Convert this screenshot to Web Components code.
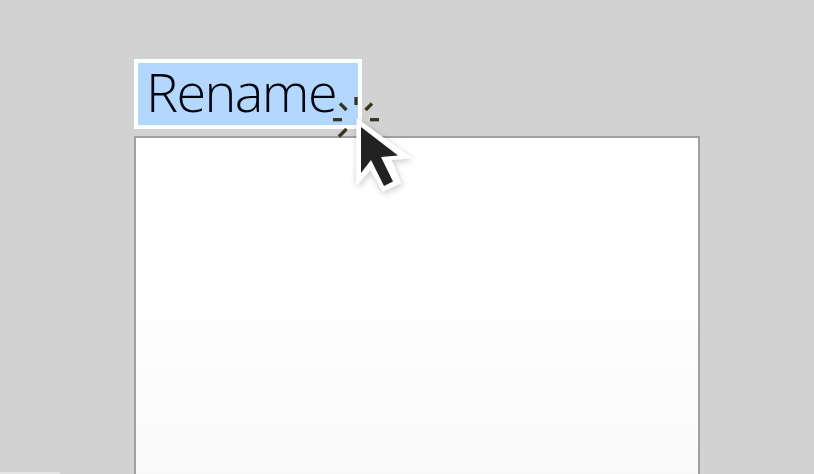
<!DOCTYPE html>
<html>
<head>
<meta charset="utf-8">
<title>Rename</title>
<style>
  html, body { margin: 0; height: 100%; }
  body { background: #d2d2d2; overflow: hidden; }
</style>
</head>
<body>
<rename-scene>
  <rename-label slot="label">Rename</rename-label>
  <click-cursor slot="label"></click-cursor>
  <blank-panel slot="panel"></blank-panel>
</rename-scene>
<script>
class RenameScene extends HTMLElement {
    constructor() {
        super();
        this.attachShadow({ mode: 'open' });
        this.shadowRoot.innerHTML = `
            <style>
                :host {
                    display: block;
                    height: 474px;
                    box-sizing: border-box;
                    padding: 59px 114px 0 134px;
                    position: relative;
                    overflow: hidden;
                    background: #d2d2d2;
                }
                .top { display: flex; position: relative; height: 70px; margin-bottom: 7px; }
                .strip {
                    position: absolute;
                    left: 0;
                    bottom: 0;
                    width: 60px;
                    height: 2px;
                    background: #e4e4e4;
                }
            </style>
            <div class="top"><slot name="label"></slot></div>
            <slot name="panel"></slot>
            <div class="strip"></div>
        `;
    }
}

class RenameLabel extends HTMLElement {
    constructor() {
        super();
        this.attachShadow({ mode: 'open' });
        this.shadowRoot.innerHTML = `
            <style>
                :host {
                    display: block;
                    box-sizing: border-box;
                    width: 228px;
                    height: 70px;
                    padding-left: 8px;
                    border: 4px solid #fff;
                    background: #b3d7ff;
                    color: #02040c;
                    font: 300 54px/56px "Open Sans", "Liberation Sans", sans-serif;
                    letter-spacing: -1.6px;
                    white-space: nowrap;
                }
            </style>
            <slot></slot>
        `;
    }
}

class BlankPanel extends HTMLElement {
    constructor() {
        super();
        this.attachShadow({ mode: 'open' });
        this.shadowRoot.innerHTML = `
            <style>
                :host {
                    display: block;
                    box-sizing: border-box;
                    height: 360px;
                    border: 2px solid #a0a0a0;
                    background: linear-gradient(#fff 0, #fff 150px, #f9f9f9 336px);
                }
            </style>
        `;
    }
}

// sparks and arrow sit over the label corner
class ClickCursor extends HTMLElement {
    constructor() {
        super();
        this.attachShadow({ mode: 'open' });
        this.shadowRoot.innerHTML = `
            <style>
                :host {
                    display: block;
                    position: absolute;
                    left: 190px;
                    top: 36px;
                    width: 100px;
                    height: 100px;
                }
                svg { display: block; overflow: visible; }
            </style>
            <svg width="100" height="100" viewBox="324 95 100 100">
                <defs>
                    <filter id="s" x="-30%" y="-30%" width="160%" height="160%">
                        <feDropShadow dx="1" dy="2" stdDeviation="3" flood-color="#223" flood-opacity=".25"/>
                    </filter>
                </defs>
                <g stroke="#39341e" stroke-width="3.300" fill="none">
                    <path d="M333 119.700H342"/>
                    <path d="M340 103.500L346.500 110"/>
                    <path d="M356 97V105"/>
                    <path d="M372 103.500L365.500 110"/>
                    <path d="M370 119.700H379"/>
                    <path d="M346.500 129L339 136.500"/>
                </g>
                <path d="M356.500 118L411.500 158L391.500 160L401 183L383 191.500L370.500 170L356 186Z" fill="#fff" filter="url(#s)"/>
                <path d="M361 127L398 155.500L381 157L393 181.500L384 186L371 160L361 173Z" fill="#222"/>
            </svg>
        `;
    }
}

customElements.define('rename-scene', RenameScene);
customElements.define('rename-label', RenameLabel);
customElements.define('blank-panel', BlankPanel);
customElements.define('click-cursor', ClickCursor);
</script>
</body>
</html>
